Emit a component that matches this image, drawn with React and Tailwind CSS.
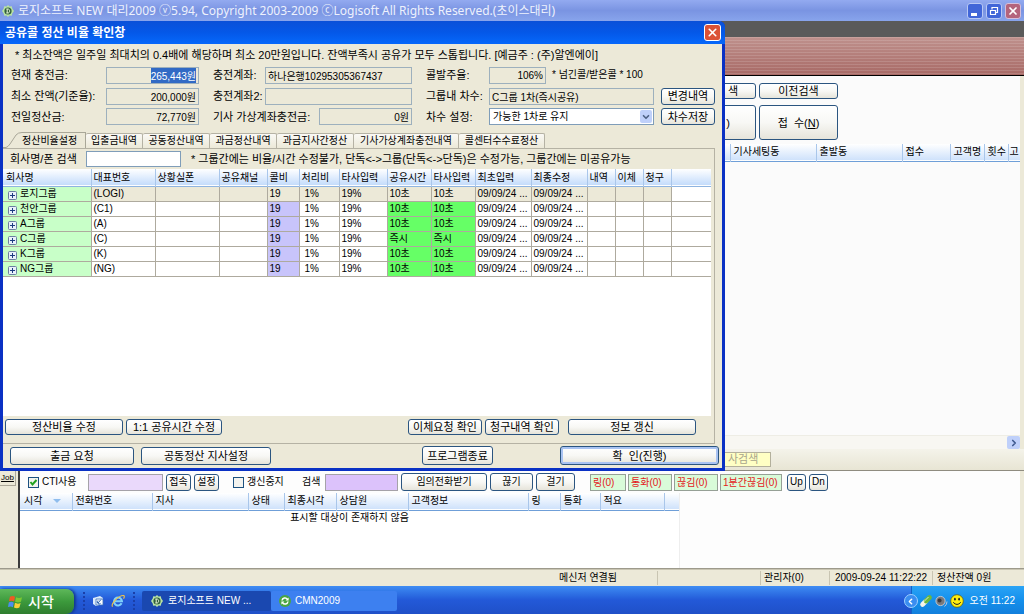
import React, { useEffect, useRef } from 'react';
import { X, ChevronDown, ChevronRight, ChevronLeft } from 'lucide-react';

const cx = (...parts) => parts.filter(Boolean).join(' ');

function XpButton({ className, children, ...rest }) {
  return (
    <button
      type="button"
      className={cx(
        'flex shrink-0 items-center justify-center whitespace-nowrap rounded-[3px] border border-[#2b5580] bg-gradient-to-b from-white via-[#f8f8f5] to-[#e6e4da] text-black',
        className,
      )}
      {...rest}
    >
      {children}
    </button>
  );
}

function CheckBox({ id, label, defaultChecked, className }) {
  return (
    <div className={cx('flex shrink-0 items-center gap-[3px]', className)}>
      <span className="grid size-[11px]">
        <input
          id={id}
          type="checkbox"
          defaultChecked={defaultChecked}
          className="peer col-start-1 row-start-1 size-[11px] appearance-none border border-[#1c5180] bg-[#f3f3ef]"
        />
        <svg viewBox="0 0 11 11" className="pointer-events-none col-start-1 row-start-1 hidden size-[11px] peer-checked:block">
          <path d="M2.5 5 L4.5 7.5 L8.5 3" fill="none" stroke="#21a121" strokeWidth="2" />
        </svg>
      </span>
      <label htmlFor={id} className="whitespace-nowrap">{label}</label>
    </div>
  );
}

function LogoIcon({ className }) {
  return (
    <svg viewBox="0 0 12 12" className={className}>
      <path d="M6 0 L7.5 1.5 L9.8 1.2 L10.3 3.6 L12 6 L10.3 8.4 L9.8 10.8 L7.5 10.5 L6 12 L4.5 10.5 L2.2 10.8 L1.7 8.4 L0 6 L1.7 3.6 L2.2 1.2 L4.5 1.5 Z" fill="#b9e3a4" />
      <circle cx="6" cy="6" r="3.6" fill="#2f5f3a" />
      <path d="M4.3 4 H6 C8.2 4 8.2 8 6 8 H4.3 M5.2 4 V8" fill="none" stroke="#eaf7d8" strokeWidth="1" />
    </svg>
  );
}

function AppTitleBar() {
  return (
    <header className="flex h-[21px] shrink-0 items-center bg-gradient-to-b from-[#93aaf0] via-[#7a94e2] to-[#88a4ec] pl-[2px] pr-[3px] text-white">
      <LogoIcon className="size-[12px]" />
      <h1 className="ml-1 flex-1 whitespace-nowrap font-['Noto_Sans','Noto_Sans_CJK_KR',sans-serif] text-[12px] text-[#eef2fd]">
        로지소프트 NEW 대리2009 ⓥ5.94, Copyright 2003-2009 ⓒLogisoft All Rights Reserved.(초이스대리)
      </h1>
      <div className="flex gap-[3px]">
        <button type="button" aria-label="최소화" className="flex size-[16px] items-end justify-start rounded-[3px] border border-[#b9c8f4] bg-[#4166d8] pb-[2px] pl-[3px]">
          <svg viewBox="0 0 8 3" className="h-[3px] w-[8px]"><rect width="6" height="3" fill="#fff" /></svg>
        </button>
        <button type="button" aria-label="이전 크기로" className="flex size-[16px] items-center justify-center rounded-[3px] border border-[#b9c8f4] bg-[#4166d8]">
          <svg viewBox="0 0 10 10" className="size-[10px]">
            <path d="M3 3.5 V1.5 H8.5 V6.5 H7" fill="none" stroke="#fff" strokeWidth="1.2" />
            <path d="M1.5 4.5 H6.5 V8.5 H1.5 Z" fill="none" stroke="#fff" strokeWidth="1.2" />
          </svg>
        </button>
        <button type="button" aria-label="닫기" className="flex size-[16px] items-center justify-center rounded-[3px] border border-[#d4bfdc] bg-[#b4647c]">
          <X className="size-[12px]" strokeWidth={3.5} />
        </button>
      </div>
    </header>
  );
}

const orderColumns = [
  ['기사세팅동', 'w-[86px]'],
  ['출발동', 'w-[86px]'],
  ['접수', 'w-[48px]'],
  ['고객명', 'w-[34px]'],
  ['횟수', 'w-[24px]'],
  ['고', ''],
];

function OrderArea() {
  return (
    <section className="flex flex-1 flex-col">
      <div className="h-4 bg-[#5a5a5a]" />
      <div className="h-[39px] border-b border-black bg-[repeating-linear-gradient(to_bottom,#ffffff22_0px,#ffffff22_1px,transparent_1px,transparent_3px),linear-gradient(to_bottom,#bf918d,#a86a66)]" />
      <div className="flex flex-1 bg-[#ece9d8]">
        <div className="flex flex-1 flex-col bg-[#fbfbfb] pl-[678px]">
          <div className="flex gap-[3px] pt-[7px]">
            <XpButton className="h-[16px] w-[78px] text-[11px]"><span className="flex-1 pr-[17px] text-right">색</span></XpButton>
            <XpButton className="h-[16px] w-[79px] text-[11px]">이전검색</XpButton>
          </div>
          <div className="flex gap-[3px] pt-[6px]">
            <XpButton className="h-[35px] w-[78px] text-[11px]"><span className="flex-1 pr-[25px] text-right">)</span></XpButton>
            <XpButton className="h-[35px] w-[79px] text-[11px]"><span className="whitespace-pre">접  수(<u>N</u>)</span></XpButton>
          </div>
          <div className="flex-1 pl-[44px] pt-1">
            <table className="w-full table-fixed border-collapse text-left text-[10px]">
              <thead>
                <tr className="h-[17px] border-b border-[#6f9fd8] bg-gradient-to-b from-white to-[#cfe2fb]">
                  <th className="w-[8px]" aria-hidden="true" />
                  {orderColumns.map(([name, width]) => (
                    <th key={name} className={cx('whitespace-nowrap border-l border-[#a9c6ea] p-0 font-normal', name === '고' ? 'pl-px' : 'pl-[3px]', width)}>{name}</th>
                  ))}
                </tr>
              </thead>
            </table>
          </div>
          <div className="flex h-[14px] items-center justify-end border-t border-[#eeede5] bg-[#f8f7f2]">
            <button type="button" aria-label="오른쪽으로" className="flex size-[13px] items-center justify-center rounded-[2px] bg-[#bfd0fa] text-[#3f5a90]">
              <ChevronRight className="size-[10px]" strokeWidth={4} />
            </button>
          </div>
        </div>
        <div className="w-1 shrink-0" />
      </div>
      <div className="flex h-[22px] items-center border-b border-[#8f8c80] bg-gradient-to-b from-[#f4f3ea] to-[#e8e5d4] pl-[722px]">
        <div className="h-[15px] w-[49px] border border-[#b3b09c] bg-[#ffffc4] pl-[5px] text-[11px] leading-[13px] text-[#a9a68c]">사검색</div>
      </div>
    </section>
  );
}

const callColumns = [
  ['전화번호', 'w-[80px]'],
  ['지사', 'w-[96px]'],
  ['상태', 'w-[36px]'],
  ['최종시각', 'w-[52px]'],
  ['상담원', 'w-[72px]'],
  ['고객정보', 'w-[120px]'],
  ['링', 'w-[32px]'],
  ['통화', 'w-[40px]'],
  ['적요', 'w-[64px]'],
  ['', ''],
];

const counters = [
  ['링(0)', 'w-[36px]'],
  ['통화(0)', 'w-[44px]'],
  ['끊김(0)', 'w-[44px]'],
  ['1분간끊김(0)', 'w-[62px]'],
];

function CallPanel() {
  return (
    <section className="flex h-[98px] shrink-0 border-b border-[#9d9a8c] bg-[#ece9d8] text-[10px]">
      <div className="w-[18px] shrink-0">
        <button type="button" className="flex h-[15px] w-[16px] items-center justify-center border-b border-r border-[#aca899] text-[8px] leading-[10px]"><u>Job</u></button>
      </div>
      <div className="mr-1 flex-1 border-l-2 border-[#3c3c3c] bg-[#fdfdfd]">
        <div className="flex h-[22px] items-center pl-2">
          <CheckBox id="cti" label="CTI사용" defaultChecked className="w-[60px]" />
          <input aria-label="CTI" className="h-[17px] w-[75px] border border-[#a5a2a8] bg-[#ead9fb]" />
          <div className="ml-[3px] flex gap-[3px]">
            <XpButton className="h-[17px] w-[25px]">접속</XpButton>
            <XpButton className="h-[17px] w-[25px]">설정</XpButton>
          </div>
          <CheckBox id="pause" label="갱신중지" className="ml-[14px] w-[69px]" />
          <label htmlFor="find" className="w-[23px] whitespace-nowrap">검색</label>
          <input id="find" className="h-[17px] w-[73px] border border-[#a5a2a8] bg-[#dcc2fb]" />
          <div className="ml-[3px] flex gap-[3px]">
            <XpButton className="h-[18px] w-[86px]">임의전화받기</XpButton>
            <XpButton className="h-[18px] w-[43px]">끊기</XpButton>
            <XpButton className="h-[18px] w-[39px]">걸기</XpButton>
          </div>
          <div className="ml-[15px] flex gap-[2px]">
            {counters.map(([text, width]) => (
              <span key={text} className={cx('h-[17px] whitespace-nowrap border border-[#96a096] bg-[#d9fbd9] pl-[2px] text-[10px] leading-[15px] text-[#e3201b]', width)}>{text}</span>
            ))}
          </div>
          <div className="ml-[5px] flex gap-[3px]">
            <XpButton className="h-[17px] w-[19px]">Up</XpButton>
            <XpButton className="h-[17px] w-[19px]">Dn</XpButton>
          </div>
        </div>
        <div className="h-[75px] w-[660px] border-r border-[#eeeeee] bg-white">
          <table className="w-full table-fixed border-collapse text-left">
            <thead>
              <tr className="h-[17px] border-b border-[#6f9fd8] bg-gradient-to-b from-white to-[#cfe2fb]">
                <th className="w-[52px] p-0 pl-1 font-normal">
                  <span className="flex items-center gap-[11px]">
                    시각
                    <svg viewBox="0 0 8 4" className="h-1 w-2"><path d="M0 0 H8 L4 4 Z" fill="#8fbdee" /></svg>
                  </span>
                </th>
                {callColumns.map(([name, width], i) => (
                  <th key={i} className={cx('whitespace-nowrap border-l border-[#a9c6ea] p-0 pl-[3px] font-normal', width)}>{name}</th>
                ))}
              </tr>
            </thead>
            <tbody>
              <tr>
                <td colSpan={11} className="h-[16px] p-0 text-center">표시할 대상이 존재하지 않음</td>
              </tr>
            </tbody>
          </table>
        </div>
      </div>
    </section>
  );
}

function StatusBar() {
  return (
    <footer className="flex h-[17px] shrink-0 items-center border-t border-[#c9c5b2] bg-[#ece9d8] text-[10px] leading-[14px]">
      <div className="flex-1 pl-[559px]">메신저 연결됨</div>
      <div className="w-[103px] border-l border-[#c9c5b2]">&nbsp;</div>
      <div className="w-[69px] border-l border-[#c9c5b2] pl-[3px]">관리자(0)</div>
      <div className="w-[103px] whitespace-nowrap border-l border-[#c9c5b2] pl-[5px]">2009-09-24 11:22:22</div>
      <div className="w-[92px] border-l border-[#c9c5b2] pl-1">정산잔액 0원</div>
    </footer>
  );
}

function DottedGrip() {
  return <div className="h-[18px] w-[2px] border-l-2 border-dotted border-[#1a3fa8]" />;
}

function TaskBar() {
  return (
    <nav className="flex h-[28px] shrink-0 items-stretch bg-gradient-to-b from-[#3f8cf3] via-[#2359d8] to-[#1f50c8] text-[11px] text-white">
      <button type="button" className="mt-[3px] flex w-[74px] items-center gap-[5px] rounded-r-[8px] bg-gradient-to-b from-[#5eb85a] via-[#3c9a3c] to-[#2e7d2e] pl-2 text-[14px] font-medium shadow-[2px_0_3px_#12378f]">
        <svg viewBox="0 0 16 15" className="h-[14px] w-[15px]">
          <path d="M2 2 Q5 0 7.5 2 L6.5 7 Q4 5.3 1 6.8 Z" fill="#ee5a24" />
          <path d="M8.6 2.3 Q11.5 4 15 2.4 L13.8 7.3 Q10.5 8.6 7.6 7.2 Z" fill="#7cc832" />
          <path d="M.8 8 Q3.6 6.5 6.2 8.2 L5.2 13 Q3 11.5 0 12.8 Z" fill="#4c8df0" />
          <path d="M7.4 8.4 Q10.2 10 13.5 8.6 L12.2 13.4 Q9.4 14.8 6.4 13.3 Z" fill="#fbcf36" />
        </svg>
        시작
      </button>
      <div className="flex w-[68px] items-center pl-[9px] pt-[2px]">
        <DottedGrip />
        <button type="button" aria-label="바탕 화면 보기" className="ml-[7px]">
          <svg viewBox="0 0 12 12" className="size-[12px]">
            <path d="M1 3 L8 1 L11 3 V9 L4 11 L1 9 Z" fill="#dcecfb" />
            <path d="M4 4 H11 V10 H4 Z" fill="#f7fbff" stroke="#3a6fb8" strokeWidth=".8" />
            <path d="M6 8 L9 4.5 M6 5.5 A1.8 1.8 0 1 0 8.5 8.5" fill="none" stroke="#2a62b0" strokeWidth="1" />
          </svg>
        </button>
        <button type="button" aria-label="Internet Explorer" className="ml-[7px]">
          <svg viewBox="0 0 14 14" className="size-[14px]">
            <path d="M10.6 9.2 A4 4 0 1 1 11 7.2 H4" fill="none" stroke="#7fd0fb" strokeWidth="2" />
            <path d="M1.5 12.8 C-.5 10 8 1 12.8 1.6 C13.8 2 13 4 12.5 4.6" fill="none" stroke="#f4c542" strokeWidth="1.1" />
          </svg>
        </button>
        <div className="ml-[8px]"><DottedGrip /></div>
      </div>
      <button type="button" className="mt-[5px] mb-[3px] flex w-[129px] items-center gap-[5px] rounded-[2px] bg-[#1a48b0] pl-[9px] text-[10px]">
        <LogoIcon className="size-[12px]" />
        로지소프트 NEW ...
      </button>
      <button type="button" className="mt-[5px] mb-[3px] flex w-[126px] items-center gap-1 rounded-[2px] bg-[#3d80f0] pl-[8px] text-[10px]">
        <svg viewBox="0 0 12 12" className="size-[12px]">
          <circle cx="6" cy="6" r="6" fill="#4aa544" />
          <path d="M3 5.5 A3 3 0 0 1 8.4 4.2 M9 6.5 A3 3 0 0 1 3.6 7.8" fill="none" stroke="#fff" strokeWidth="1.5" />
          <path d="M9.6 2.4 V5.4 H6.6 Z M2.4 9.6 V6.6 H5.4 Z" fill="#fff" />
        </svg>
        CMN2009
      </button>
      <div className="flex-1" />
      <div className="flex items-center pt-[2px]">
        <button type="button" aria-label="숨겨진 아이콘 표시" className="z-10 -mr-[7px] flex size-[14px] items-center justify-center rounded-full border border-[#9fd0ff] bg-[#3a8df0]">
          <ChevronLeft className="size-[9px]" strokeWidth={4} />
        </button>
        <div className="-mt-[2px] flex h-[28px] items-center gap-[2px] border-l border-[#1261c4] bg-gradient-to-b from-[#2aa4f6] via-[#1490ec] to-[#127fdc] pl-[7px] pr-[9px] pt-[2px]">
          <svg viewBox="0 0 14 14" className="size-[14px]">
            <path d="M3.5 10.5 L7 7" stroke="#f4f4e8" strokeWidth="4.6" strokeLinecap="round" />
            <path d="M7 7 L10.5 3.5" stroke="#6cb83c" strokeWidth="4.6" strokeLinecap="round" />
            <path d="M3 9.5 L9.5 3" stroke="#ffffff" strokeWidth="1" opacity=".7" />
          </svg>
          <svg viewBox="0 0 13 13" className="size-[13px]">
            <circle cx="5.5" cy="6" r="4.6" fill="#77787c" stroke="#c9ccd2" strokeWidth=".9" />
            <circle cx="4.6" cy="5.5" r="2" fill="#3a3b40" />
            <path d="M9.5 11.5 Q12 9.5 12 6.5" fill="none" stroke="#bcc6d8" strokeWidth="1" />
          </svg>
          <svg viewBox="0 0 14 14" className="size-[14px]">
            <circle cx="7" cy="7" r="6.3" fill="#ffef10" stroke="#5c5400" strokeWidth=".7" />
            <ellipse cx="4.9" cy="5.2" rx=".9" ry="1.4" fill="#222" />
            <ellipse cx="9.1" cy="5.2" rx=".9" ry="1.4" fill="#222" />
            <path d="M3.2 8.3 Q7 12.6 10.8 8.3" fill="none" stroke="#222" strokeWidth="1" />
          </svg>
          <time className="ml-[4px] whitespace-nowrap text-[10px]">오전 11:22</time>
        </div>
      </div>
    </nav>
  );
}

function Field({ id, label, value, className, right, inputRef }) {
  return (
    <>
      <label htmlFor={id} className="shrink-0 whitespace-nowrap">{label}</label>
      <input
        id={id}
        ref={inputRef}
        readOnly
        defaultValue={value}
        className={cx(
          'h-[17px] min-w-0 border border-[#9db0bd] bg-[#ece9d8] px-[2px] text-[10px] outline-none selection:bg-[#316ac5] selection:text-white',
          right && 'text-right',
          className,
        )}
      />
    </>
  );
}

function AccountForm() {
  const balance = useRef(null);
  useEffect(() => {
    balance.current.focus();
    balance.current.select();
  }, []);
  const colA = 'flex w-[188px] shrink-0 items-center justify-between';
  const colB = 'flex w-[199px] shrink-0 items-center justify-between';
  const label = 'w-[63px] shrink-0 whitespace-nowrap';
  return (
    <form className="flex flex-col gap-[3px] pl-[8px] text-[11px]">
      <div className="flex h-[18px] items-center gap-[14px]">
        <div className={colA}><Field id="cur" label="현재 충전금:" value="265,443원" right className="w-[93px]" inputRef={balance} /></div>
        <div className={colB}><Field id="acc1" label="충전계좌:" value="하나은행10295305367437" className="w-[147px]" /></div>
        <div className="flex items-center">
          <label htmlFor="rate" className={label}>콜발주율:</label>
          <input id="rate" readOnly defaultValue="106%" className="h-[17px] w-[57px] border border-[#9db0bd] bg-[#ece9d8] px-[2px] text-right text-[10px]" />
          <span className="ml-[6px] whitespace-nowrap text-[10px]">* 넘긴콜/받은콜 * 100</span>
        </div>
      </div>
      <div className="flex h-[18px] items-center gap-[14px]">
        <div className={colA}><Field id="min" label="최소 잔액(기준율):" value="200,000원" right className="w-[93px]" /></div>
        <div className={colB}><Field id="acc2" label="충전계좌2:" value="" className="w-[147px]" /></div>
        <div className="flex items-center">
          <label htmlFor="grp" className={label}>그룹내 차수:</label>
          <input id="grp" readOnly defaultValue="C그룹 1차(즉시공유)" className="h-[17px] w-[165px] border border-[#9db0bd] bg-[#ece9d8] px-[2px] text-[10px]" />
          <XpButton className="ml-[7px] h-[17px] w-[54px]">변경내역</XpButton>
        </div>
      </div>
      <div className="flex h-[17px] items-center gap-[14px]">
        <div className={colA}><Field id="prev" label="전일정산금:" value="72,770원" right className="w-[93px]" /></div>
        <div className={colB}><Field id="virt" label="기사 가상계좌충전금:" value="0원" right className="w-[93px]" /></div>
        <div className="flex items-center">
          <label htmlFor="ord" className={label}>차수 설정:</label>
          <div className="grid w-[165px] items-center">
            <select id="ord" className="col-start-1 row-start-1 h-[17px] w-full appearance-none border border-[#7f9db9] bg-white pl-[3px] text-[10px]">
              <option>가능한 1차로 유지</option>
            </select>
            <span className="pointer-events-none col-start-1 row-start-1 mr-[2px] flex h-[13px] w-[12px] items-center justify-center justify-self-end rounded-[2px] bg-[#bfd0fa] text-[#4d6185]">
              <ChevronDown className="size-[10px]" strokeWidth={4} />
            </span>
          </div>
          <XpButton className="ml-[7px] h-[17px] w-[54px]">차수저장</XpButton>
        </div>
      </div>
    </form>
  );
}

const tabs = [
  ['입출금내역', 'w-[57px]'],
  ['공동정산내역', 'w-[67px]'],
  ['과금정산내역', 'w-[67px]'],
  ['과금지사간정산', 'w-[77px]'],
  ['기사가상계좌충전내역', 'w-[105px]'],
  ['콜센터수수료정산', 'w-[86px]'],
];

const gridColumns = [
  ['회사명', 'w-[88px]'],
  ['대표번호', 'w-[64px]'],
  ['상황실폰', 'w-[64px]'],
  ['공유채널', 'w-[48px]'],
  ['콜비', 'w-[32px]'],
  ['처리비', 'w-[40px]'],
  ['타사입력', 'w-[48px]'],
  ['공유시간', 'w-[44px]'],
  ['타사입력', 'w-[44px]'],
  ['최초입력', 'w-[56px]'],
  ['최종수정', 'w-[56px]'],
  ['내역', 'w-[28px]'],
  ['이체', 'w-[28px]'],
  ['청구', 'w-[28px]'],
  ['', ''],
];

const groups = [
  ['로지그룹', '(LOGI)', '10초'],
  ['천안그룹', '(C1)', '10초'],
  ['A그룹', '(A)', '10초'],
  ['C그룹', '(C)', '즉시'],
  ['K그룹', '(K)', '10초'],
  ['NG그룹', '(NG)', '10초'],
];

function cellColor(column, row) {
  if (column === 0) return 'bg-[#c8ffc8]';
  if (column === 14) return 'bg-white';
  if (row === 0) return 'bg-[#ece9d8]';
  if (column === 4) return 'bg-[#c8c4fb]';
  if (column === 7 || column === 8) return 'bg-[#66ff66]';
  return 'bg-white';
}

function GroupTable() {
  return (
    <table className="w-full table-fixed border-collapse text-left text-[10px] leading-[13px]">
      <thead>
        <tr className="h-[17px] border-b border-[#8fb4e0] bg-gradient-to-b from-white to-[#c4dcfb]">
          {gridColumns.map(([name, width], i) => (
            <th key={i} className={cx('whitespace-nowrap p-0 font-normal', i > 0 && 'border-l border-[#a9c6ea]', i > 0 ? 'pl-[2px]' : 'pl-[3px]', width)}>{name}</th>
          ))}
        </tr>
      </thead>
      <tbody>
        {groups.map(([name, code, time], row) => {
          const cells = [name, code, '', '', '19', '1%', '19%', time, time, '09/09/24 ...', '09/09/24 ...', '', '', '', ''];
          return (
            <tr key={name} className="h-[15px]">
              {cells.map((text, column) => (
                <td
                  key={column}
                  className={cx(
                    'whitespace-nowrap border-b border-[#aeaa9e] p-0',
                    column < 14 && 'border-r',
                    column === 5 || column === 0 ? 'pl-[5px]' : 'pl-[2px]',
                    cellColor(column, row),
                  )}
                >
                  {column === 0 ? (
                    <span className="flex items-end gap-[3px]">
                      <button type="button" aria-label="펼치기" className="flex">
                        <svg viewBox="0 0 9 9" className="size-[9px]">
                          <rect x=".5" y=".5" width="8" height="8" rx="1" fill="#e9f1fb" stroke="#6a7fa0" />
                          <path d="M2 4.5 H7 M4.5 2 V7" stroke="#1c3c80" />
                        </svg>
                      </button>
                      {text}
                    </span>
                  ) : text}
                </td>
              ))}
            </tr>
          );
        })}
      </tbody>
    </table>
  );
}

function SettlementDialog() {
  return (
    <div role="dialog" aria-labelledby="dlg-title" className="absolute left-0 top-[21px] w-[725px] rounded-tr-[6px] border-b-[3px] border-l-[3px] border-r-[3px] border-[#0a31c4] bg-[#ece9d8]">
      <div className="-mx-[3px] flex h-[23px] items-center justify-between rounded-tr-[6px] bg-gradient-to-b from-[#0a50d8] via-[#0458e8] to-[#0668fb] pl-[5px] pr-[4px] text-white">
        <h2 id="dlg-title" className="text-[12px] font-bold">공유콜 정산 비율 확인창</h2>
        <button type="button" aria-label="닫기" className="flex size-[17px] items-center justify-center rounded-[3px] border border-white bg-[#dc5236]">
          <X className="size-[13px]" strokeWidth={3} />
        </button>
      </div>
      <p className="flex h-[22px] items-center whitespace-nowrap pl-[12px] text-[11px]">
        * 최소잔액은 일주일 최대치의 0.4배에 해당하며 최소 20만원입니다. 잔액부족시 공유가 모두 스톱됩니다. [예금주 : (주)알엔에이]
      </p>
      <AccountForm />
      <div role="tablist" className="mt-[7px] flex h-[16px] items-end text-[10px] leading-[14px]">
        <button type="button" role="tab" aria-selected="true" className="flex h-[16px] w-[83px] items-center">
          <svg viewBox="0 0 19 16" className="h-[16px] w-[19px] shrink-0">
            <path d="M0 15.5 H3 Q5 15 7 12 L13 3 Q15 .5 19 .5" fill="none" stroke="#a9a798" />
          </svg>
          <span className="h-[16px] flex-1 whitespace-nowrap border-r border-t border-[#a9a798] text-left leading-[16px]">정산비율설정</span>
        </button>
        {tabs.map(([name, width]) => (
          <button key={name} type="button" role="tab" aria-selected="false" className={cx('h-[15px] whitespace-nowrap rounded-t-[2px] border-r border-t border-[#b5b2a4] bg-gradient-to-b from-[#faf9f5] to-[#ece9d8]', width)}>{name}</button>
        ))}
      </div>
      <div role="tabpanel" className="mr-[7px] border-b border-r border-t border-[#b5b2a4]">
        <div className="flex h-[20px] items-center pl-[7px] text-[11px]">
          <label htmlFor="company" className="w-[76px] whitespace-nowrap">회사명/폰 검색</label>
          <input id="company" className="h-[16px] w-[95px] border border-[#7f9db9] bg-white" />
          <span className="ml-[10px] whitespace-nowrap">* 그룹간에는 비율/시간 수정불가, 단독&lt;-&gt;그룹(단독&lt;-&gt;단독)은 수정가능, 그룹간에는 미공유가능</span>
        </div>
        <div className="mr-[3px] min-h-[247px] bg-white"><GroupTable /></div>
        <div className="flex pb-[8px] pl-[2px] pt-[3px] text-[11px]">
          <XpButton className="h-[16px] w-[118px]">정산비율 수정</XpButton>
          <XpButton className="ml-[3px] h-[16px] w-[96px]">1:1 공유시간 수정</XpButton>
          <XpButton className="ml-auto h-[16px] w-[74px]">이체요청 확인</XpButton>
          <XpButton className="ml-[3px] h-[16px] w-[74px]">청구내역 확인</XpButton>
          <XpButton className="ml-[9px] mr-[18px] h-[16px] w-[128px]">정보 갱신</XpButton>
        </div>
      </div>
      <div className="flex items-center pb-[3px] pl-[7px] pt-[2px] text-[11px]">
        <XpButton className="h-[18px] w-[124px]">출금 요청</XpButton>
        <XpButton className="ml-[7px] h-[18px] w-[130px]">공동정산 지사설정</XpButton>
        <XpButton className="ml-auto h-[19px] w-[71px]">프로그램종료</XpButton>
        <XpButton className="ml-[67px] mr-[3px] h-[19px] w-[159px] shadow-[inset_0_0_0_2px_#a9c3f2]"><span className="whitespace-pre">확  인(진행)</span></XpButton>
      </div>
    </div>
  );
}

export default function App() {
  return (
    <div className="relative flex min-h-screen flex-col overflow-hidden bg-[#ece9d8] font-['Liberation_Sans','Noto_Sans_CJK_KR',sans-serif] leading-[14px] text-black">
      <AppTitleBar />
      <OrderArea />
      <CallPanel />
      <StatusBar />
      <TaskBar />
      <SettlementDialog />
    </div>
  );
}
